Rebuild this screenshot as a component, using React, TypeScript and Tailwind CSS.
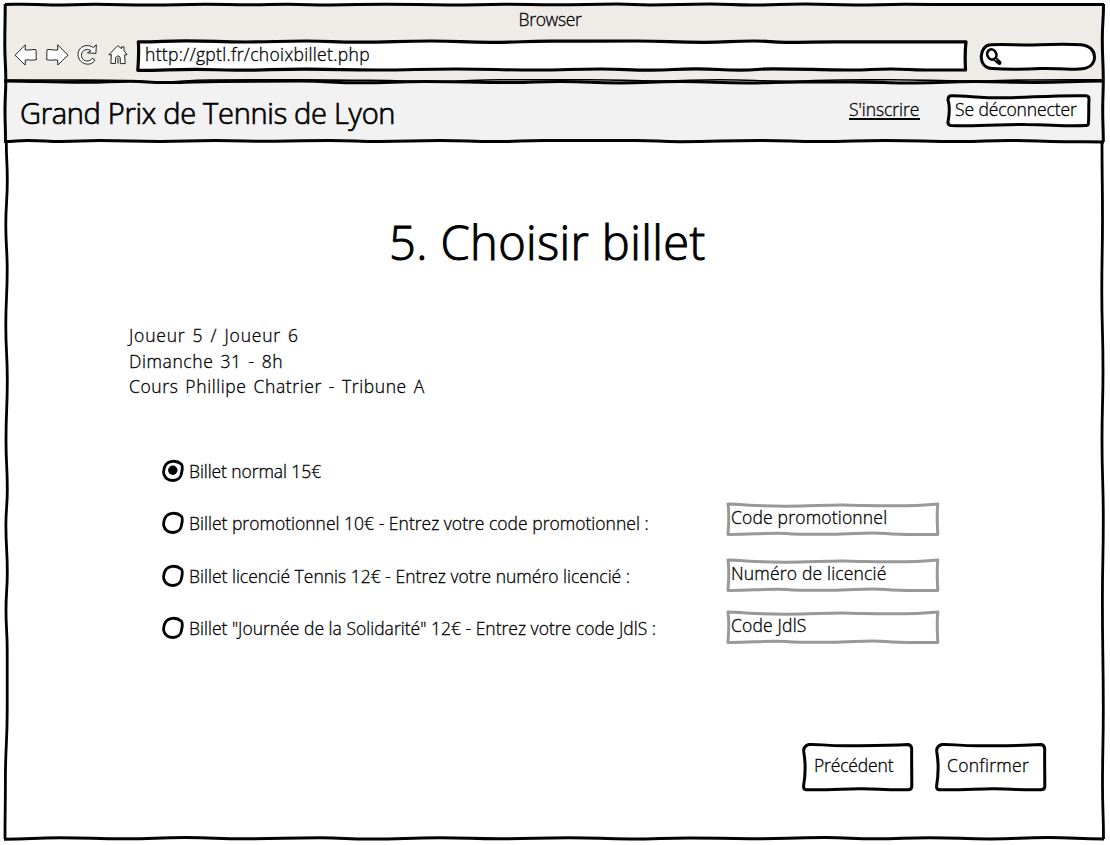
import type { ReactNode } from "react";

type Point = [number, number];

/** Smooth hand-drawn line through the given points. */
function sketch(points: Point[]): string {
  let d = `M${points[0][0]} ${points[0][1]}`;
  for (let i = 1; i < points.length; i++) {
    const [px, py] = points[i - 1];
    const [x, y] = points[i];
    if (Math.abs(x - px) > Math.abs(y - py)) {
      const m = (px + x) / 2;
      d += `C${m} ${py} ${m} ${y} ${x} ${y}`;
    } else {
      const m = (py + y) / 2;
      d += `C${px} ${m} ${x} ${m} ${x} ${y}`;
    }
  }
  return d;
}

const topEdge: Point[] = [[5, 4.5], [22, 4.2], [52, 5], [95, 4.3], [150, 5], [205, 4.3], [250, 4.8], [288, 4.3], [330, 5], [385, 4.2], [450, 5], [505, 4.3], [555, 4.8], [617, 4.1], [650, 5], [710, 4.1], [752, 5.1], [805, 4.1], [855, 5], [905, 4.3], [960, 4.5], [1104, 4.5]];
const chromeEdge: Point[] = [[5, 80], [60, 80], [110, 80.2], [160, 82], [210, 80], [300, 79.8], [370, 80.4], [440, 81.5], [500, 79.8], [590, 79.8], [660, 81], [720, 79.8], [790, 81.2], [840, 80], [890, 79.8], [970, 81], [1030, 80], [1104, 79.8]];
const headerTop: Point[] = [[4, 81], [40, 81.5], [85, 82.3], [130, 81.3], [165, 82.5], [220, 81.5], [300, 81], [360, 82.8], [425, 81.5], [510, 82.6], [560, 81.6], [620, 83], [680, 81.6], [748, 83], [800, 82], [850, 82], [915, 83], [975, 81.6], [1035, 82.4], [1104, 81]];
const headerBottom: Point[] = [[4, 141.5], [28, 140.4], [62, 141.5], [100, 140.6], [160, 141.5], [215, 140.6], [275, 141.3], [330, 140.4], [380, 141.4], [440, 140.5], [495, 141.6], [545, 140.4], [600, 140.5], [635, 140.4], [680, 141.7], [760, 140.5], [820, 141.6], [885, 140.5], [960, 141.6], [1010, 140.4], [1065, 141.7], [1104, 142]];
const leftEdge: Point[] = [[5.2, 4], [4.8, 45], [5.8, 80], [5, 110], [5.5, 141]];
const bodyLeft: Point[] = [[6.3, 142], [7.3, 180], [5.8, 225], [7.2, 270], [5.8, 325], [7.3, 380], [6, 440], [7.3, 490], [5.9, 525], [7.3, 572], [6, 610], [7.2, 650], [7.2, 710], [5.4, 780], [5, 839]];
const rightEdge: Point[] = [[1103.5, 4], [1102.3, 40], [1103.3, 80], [1102.7, 110], [1103.3, 142]];
const bodyRight: Point[] = [[1102, 142], [1102.5, 220], [1101.8, 290], [1103, 370], [1102, 440], [1103.3, 520], [1102.4, 600], [1103.3, 710], [1102.5, 785], [1103.5, 839]];
const bottomEdge: Point[] = [[4, 839.3], [60, 837.8], [125, 838.8], [185, 837.6], [245, 838.8], [320, 837.8], [370, 839], [440, 837.8], [500, 838.8], [570, 837.8], [630, 838.9], [690, 837.9], [750, 838.8], [825, 837.6], [875, 838.8], [930, 837.7], [990, 838.9], [1048, 837.6], [1104, 839]];

function WindowFrame() {
  return (
    <svg className="pointer-events-none absolute inset-0" width="1110" height="845" fill="none" stroke="#000">
      <path d={sketch(topEdge)} strokeWidth="3" />
      <path d={sketch(chromeEdge)} strokeWidth="1.6" />
      <path d={sketch(headerTop)} strokeWidth="3" />
      <path d={sketch(headerBottom)} strokeWidth="3" />
      <path d={sketch(leftEdge)} strokeWidth="3" />
      <path d={sketch(bodyLeft)} strokeWidth="2.8" />
      <path d={sketch(rightEdge)} strokeWidth="3" />
      <path d={sketch(bodyRight)} strokeWidth="2.8" />
      <path d={sketch(bottomEdge)} strokeWidth="3" />
    </svg>
  );
}

function SketchBox({ className, d, width = 3, stroke = "#000", children }: { className: string; d: string; width?: number; stroke?: string; children?: ReactNode }) {
  return (
    <div className={`relative shrink-0 ${className}`}>
      <svg className="absolute inset-0 h-full w-full overflow-visible">
        <path d={d} fill="#fff" stroke={stroke} strokeWidth={width} strokeLinejoin="round" />
      </svg>
      <div className="relative">{children}</div>
    </div>
  );
}

const urlPath =
  sketch([[2.3, 1.8], [50, 0.8], [110, 2], [170, 1], [222, 2.2], [295, 1], [355, 2.3], [415, 1.2], [500, 1], [568, 2.4], [618, 1], [650, 2.3], [700, 1.8], [830, 1.8]]) +
  "C829 10 829 20 829.5 29.5" +
  sketch([[829.5, 30], [790, 30], [755, 29], [715, 30], [637, 28.8], [605, 30.2], [560, 28.8], [515, 30.2], [465, 29], [400, 30], [320, 29], [240, 30], [170, 29.2], [100, 30.2], [60, 29.3], [1.8, 30.3]]).replace("M", "L") +
  "C2.5 20 3.2 10 2.3 1.8Z";

const pillPath =
  "M12 1.8C30 .8 40 2.8 60 1.8S90 .8 102 1.8C111 2.5 115.500 8 115.500 14C115.500 21 110 25.8 100 26C85 27 75 24.8 62 25.5S30 26.7 13 25.5C6 25 2 20 2.3 13C2.6 7 6 2 12 1.8Z";

const signOutPath =
  "M5 1.8C20 1.5 35 4.2 60 3.8S110 1.2 140 1.8Q143 2 143 5C142.5 13 143 20 142.500 28.500Q142.500 31.500 140 31.500C115 32.300 105 30.500 80 30.500C60 30 35 32.500 5 31.500Q1.6 31 2 28C3.500 20 4 12 2 6Q2 2 5 1.8Z";

const actionPath =
  "M7 1.5C15 .8 25 3 45 2.8S85 2.8 106 1.5Q109.5 2 109.7 6C109.500 15 109.8 30 109.8 43.5Q109.5 46.8 106 46.8C80 47.2 75 45.5 57 45.8S25 47.2 4 46.8Q1.3 46.5 1.6 43C3.4 32 4 22 1.8 9Q1 3 7 1.5Z";

const fieldPath =
  "M2 2C20 2.5 30 4.3 60 4.2S100 2.7 125 3.2S180 5.2 211.8 2C210.6 12 211.3 22 211.8 32.4C195 32.5 175 33 160 31.5S130 31.8 105 32.2S75 32.5 60 31.4S20 32.8 2 32.4C2.8 22 3.4 12 2 2Z";

function ArrowIcon({ flip = false }: { flip?: boolean }) {
  return (
    <svg width="24" height="24" viewBox="0 0 24 24" className={flip ? "-scale-x-100" : ""} fill="#fff" stroke="#222" strokeWidth="1">
      <path d="M1 12.3L11.3 1.8L11.2 7C14.500 7.400 18 6.300 21.800 6.600C22.700 9.500 21.700 12.500 22.400 16.600C18.500 17.800 15 16.500 11.300 17L11.200 22C8.500 20 5 15.500 1 12.300Z" />
    </svg>
  );
}

function ReloadIcon() {
  return (
    <svg width="24" height="24" viewBox="0 0 24 24" fill="#fff" stroke="#222" strokeWidth="1">
      <path d="M20.300 1.800L19.900 10.600C17.500 9.800 14.800 10.500 11.600 9.800L15 7.800C12.200 5.200 7.800 6.200 6 9.600C4.200 13.400 6.600 17.600 10.700 18C13.300 18.200 15.200 17.100 16 15.300L19 17.100C16.700 20.800 12.500 22 8.500 20.600C3.200 18.600 .8 13 2.700 8C5 2.200 12.200 1 17.300 4.600Z" />
    </svg>
  );
}

function HomeIcon() {
  return (
    <svg width="24" height="24" viewBox="0 0 24 24" fill="#fff" stroke="#222" strokeWidth="1" strokeLinejoin="round">
      <path d="M1.800 11.800L10.800 2.700L14.500 5.700L14.600 3.900H17V7.700L20 11.600L17.600 11.900L18.200 20.600H13.400C13 18 13.800 16 12.800 13.700C11.500 12.600 10 12.800 8.800 14.200C8.200 16 8.600 18 8.400 20.500L3.800 20.400L4.400 11.600Z" />
      <path d="M11 14.500V20.500" />
    </svg>
  );
}

function SearchIcon() {
  return (
    <svg width="18" height="18" viewBox="0 0 18 18" fill="none" stroke="#000">
      <ellipse cx="6.800" cy="6.500" rx="4.500" ry="5.200" strokeWidth="2.600" transform="rotate(-24 6.800 6.500)" />
      <path d="M11.200 12L14.300 14.700" strokeWidth="4.400" strokeLinecap="round" />
      <path d="M10 11.400L12 12.300" stroke="#fff" strokeWidth="0.800" />
    </svg>
  );
}

function Radio({ checked = false }: { checked?: boolean }) {
  return (
    <svg width="24" height="24" viewBox="0 0 24 24" className="shrink-0">
      <path d="M10.500 2.500C14 1.800 17.500 2.700 20.500 5.300C22.300 8 20.900 11.500 20.400 14.800C19.800 19 16 21.300 12.300 21.500C7.500 21.500 4 18.800 2.800 15C2.200 11.500 3 8 5 5.300C6.500 3.500 8.500 2.800 10.500 2.500Z" fill="#fff" stroke="#000" strokeWidth="2.800" />
      {checked && <circle cx="11.800" cy="11.200" r="4.700" fill="#000" />}
    </svg>
  );
}

const tickets = [
  { label: "Billet normal 15€", track: "tracking-[-0.08px]", row: "h-[52px]" },
  { label: "Billet promotionnel 10€ - Entrez votre code promotionnel :", track: "tracking-[0.01px]", row: "h-[53px]" },
  { label: "Billet licencié Tennis 12€ - Entrez votre numéro licencié :", track: "tracking-[0.01px]", row: "h-[52px]" },
  { label: 'Billet "Journée de la Solidarité" 12€ - Entrez votre code JdlS :', track: "tracking-[0.01px]", row: "h-[52px]" },
];

const fields = [
  { label: "Code promotionnel", gap: "mb-[21px]" },
  { label: "Numéro de licencié", gap: "mb-[17px]" },
  { label: "Code JdlS", gap: "" },
];

export default function App() {
  return (
    <div className="relative h-[845px] w-[1110px] overflow-hidden whitespace-nowrap bg-white pl-[5px] pt-[4px] font-['Open_Sans',sans-serif] text-[17.5px] font-light leading-6 tracking-[-0.32px] text-black [-webkit-text-stroke:0.3px_#000]">
      <div className="flex h-[76px] w-[1099px] flex-col bg-[#efebe6]">
        <div className="pr-[9px] pt-[3px] text-center">Browser</div>
        <div className="flex pl-[9px] pt-[9px]">
          <div className="flex gap-[7px] pt-[3px]">
            <ArrowIcon />
            <ArrowIcon flip />
            <ReloadIcon />
            <HomeIcon />
          </div>
          <SketchBox className="ml-[5px] h-[32px] w-[831px] pl-[9px] pt-[2px] tracking-[0.34px]" d={urlPath} width={3.2}>
            http://gptl.fr/choixbillet.php
          </SketchBox>
          <SketchBox className="ml-[12px] mt-[3px] h-[28px] w-[117px] pl-[6px] pt-[5px]" d={pillPath}>
            <SearchIcon />
          </SketchBox>
        </div>
      </div>

      <header className="flex h-[62px] w-[1099px] items-start bg-[#f2f2f2] pl-[15px]">
        <h1 className="w-[829px] pt-[13px] text-[29px] leading-10 tracking-[-0.28px] [-webkit-text-stroke:0.7px_#000]">Grand Prix de Tennis de Lyon</h1>
        <div className="mt-[17px] h-[23px] w-[71px] border-b-2 border-black tracking-[-0.05px]">S'inscrire</div>
        <SketchBox className="ml-[26px] mt-[14px] h-[34px] w-[145px] pl-[9px] pt-[3px] tracking-[-0.1px]" d={signOutPath}>
          Se déconnecter
        </SketchBox>
      </header>

      <main className="flex flex-col">
        <h2 className="pl-[384px] pt-[70px] text-[47px] leading-[60px] tracking-[0.4px] [-webkit-text-stroke:1px_#000]">5. Choisir billet</h2>
        <div className="pl-[124px] pt-[51px] leading-[25.5px] tracking-[0.6px] [word-spacing:1.8px]">
          <p className="tracking-[0.8px]">Joueur 5 / Joueur 6</p>
          <p>Dimanche 31 - 8h</p>
          <p>Cours Phillipe Chatrier - Tribune A</p>
        </div>
        <div className="flex pl-[156px] pt-[59.5px]">
          <div className="w-[565px]">
            {tickets.map((t, i) => (
              <div key={t.label} className={`flex items-start gap-[4px] ${t.row}`}>
                <Radio checked={i === 0} />
                <span className={t.track}>{t.label}</span>
              </div>
            ))}
          </div>
          <div className="pt-[43px]">
            {fields.map((f) => (
              <SketchBox key={f.label} className={`h-[35px] w-[214px] pl-[5px] pt-[3px] tracking-[0.18px] ${f.gap}`} d={fieldPath} stroke="#999">
                {f.label}
              </SketchBox>
            ))}
          </div>
        </div>
        <div className="flex gap-[22px] pl-[797px] pt-[75px]">
          <SketchBox className="h-[49px] w-[111px] pl-[12px] pt-[10px] tracking-[-0.15px]" d={actionPath}>
            Précédent
          </SketchBox>
          <SketchBox className="h-[49px] w-[111px] pl-[12px] pt-[10px] tracking-[0.3px]" d={actionPath}>
            Confirmer
          </SketchBox>
        </div>
      </main>
      <WindowFrame />
    </div>
  );
}
